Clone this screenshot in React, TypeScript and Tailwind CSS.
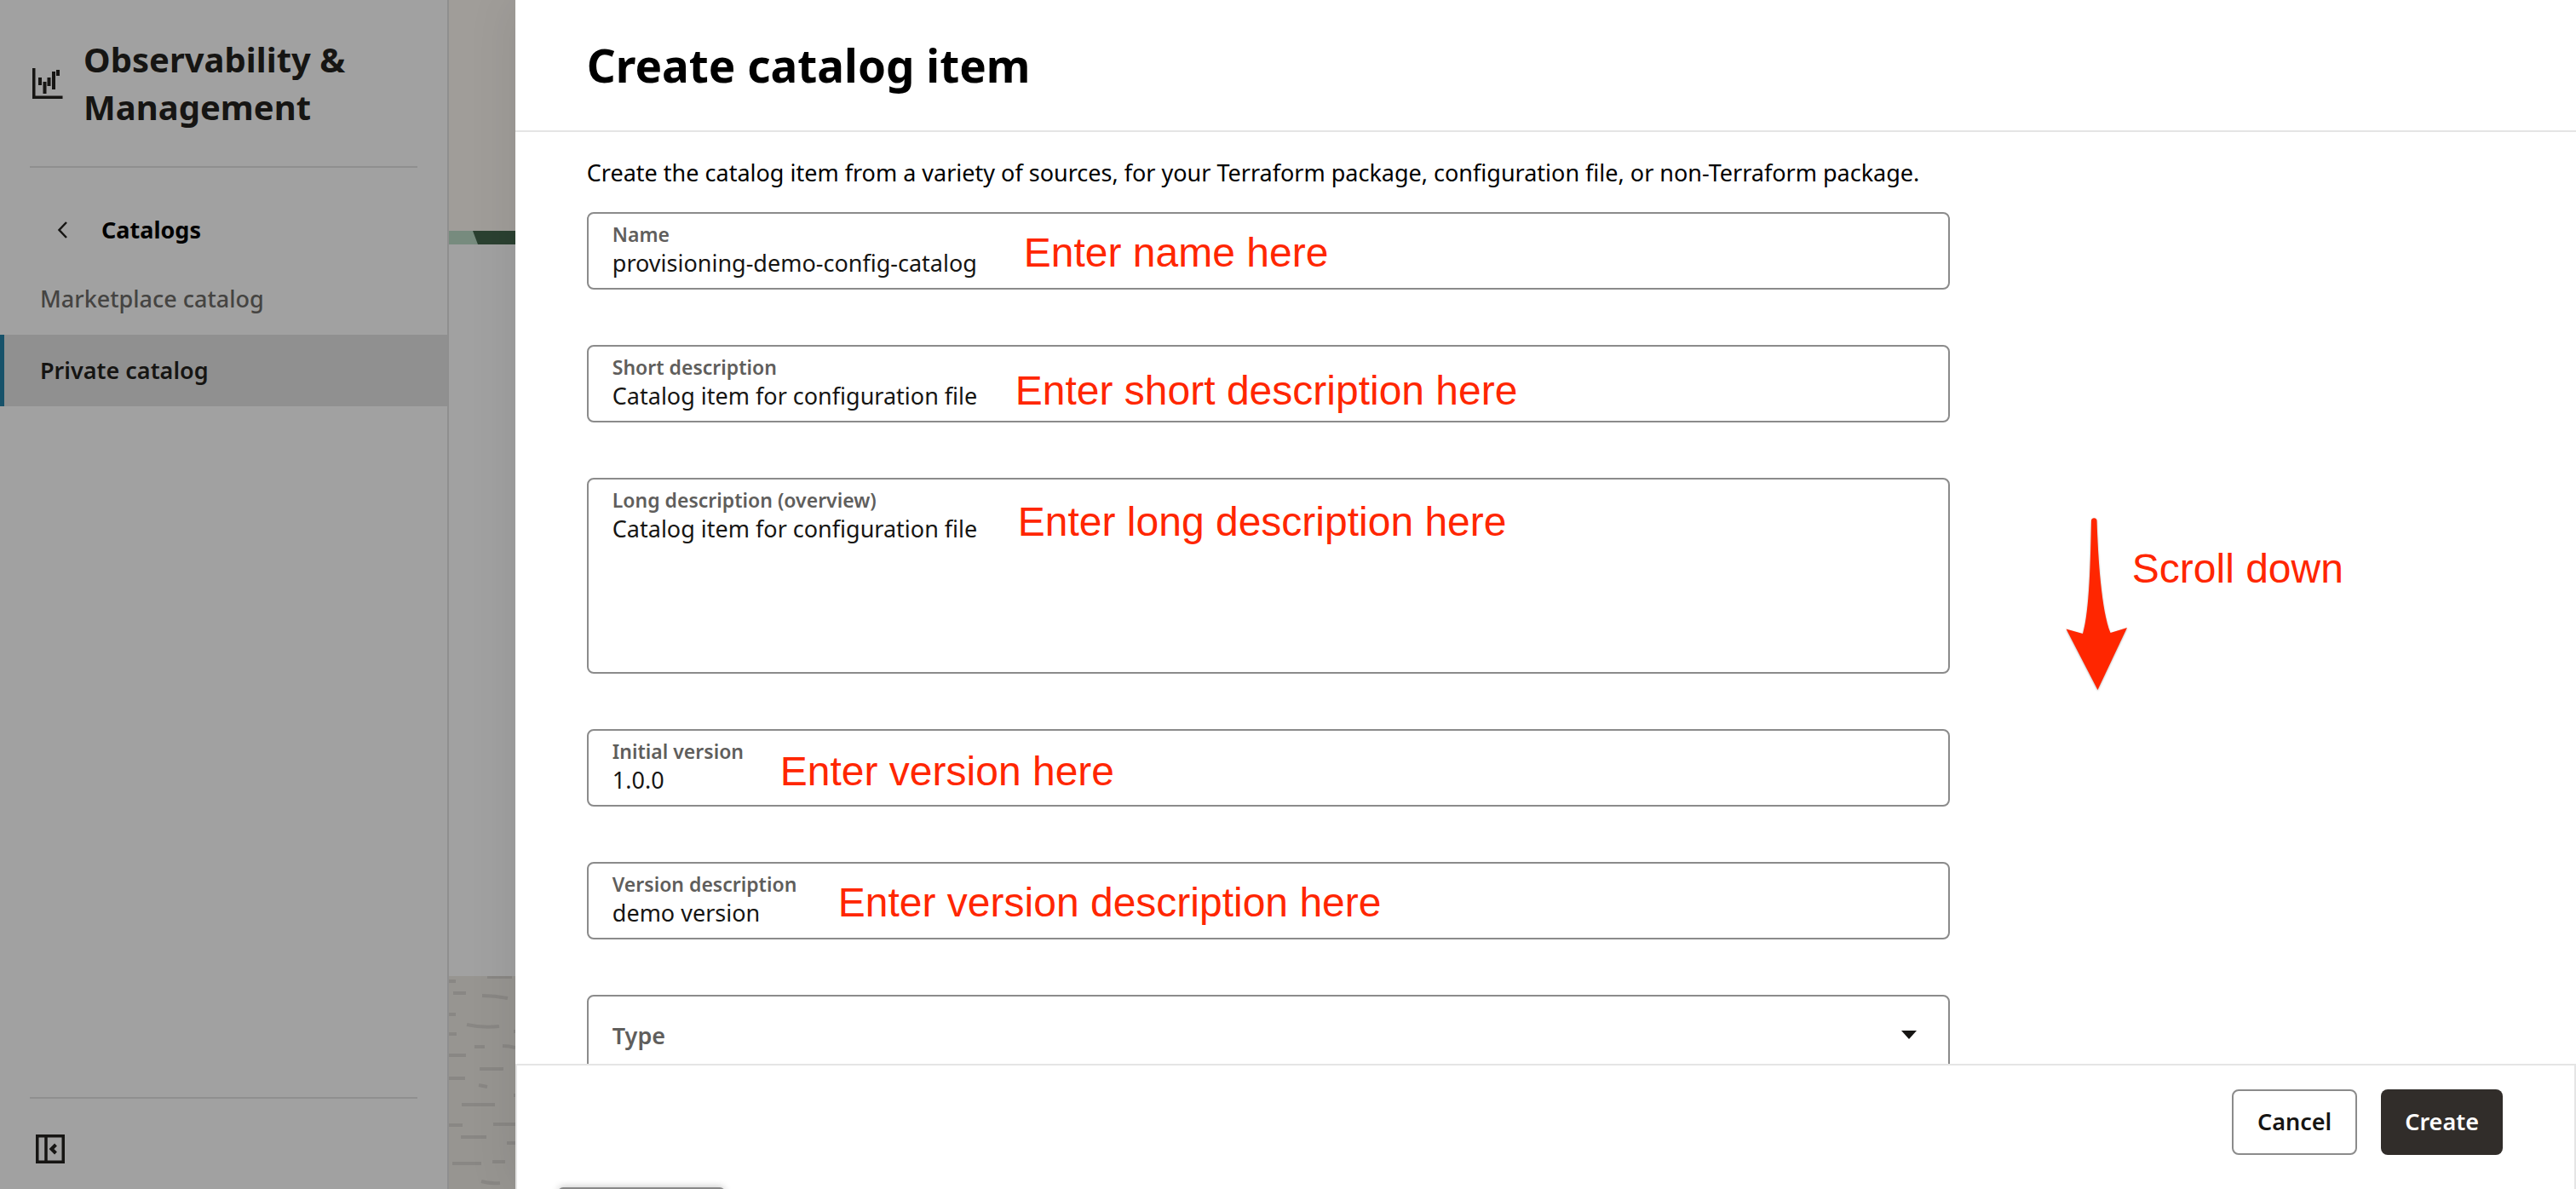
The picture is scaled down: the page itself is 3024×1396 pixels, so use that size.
import type { ReactNode } from "react";

const fieldText = "w-full bg-transparent text-[27px] leading-9 text-[#161513] outline-none";

function Note({ className, children }: { className: string; children: ReactNode }) {
  return (
    <span
      className={`pointer-events-none absolute whitespace-nowrap font-['Liberation_Sans',sans-serif] text-5xl leading-14 text-[#ff2600] ${className}`}
    >
      {children}
    </span>
  );
}

function Field({
  id,
  label,
  value,
  note,
  noteClass,
  multiline = false,
}: {
  id: string;
  label: string;
  value: string;
  note: string;
  noteClass: string;
  multiline?: boolean;
}) {
  return (
    <div className="relative flex flex-col rounded-lg border-2 border-[#8b8b8b] px-7 pt-2 pb-[11px]">
      <label htmlFor={id} className="self-start text-[23px] leading-8 font-semibold text-[#5f5e5c]">
        {label}
      </label>
      {multiline ? (
        <textarea id={id} defaultValue={value} className={`${fieldText} h-[175px] resize-none`} />
      ) : (
        <input id={id} type="text" defaultValue={value} className={`${fieldText} h-9`} />
      )}
      <Note className={noteClass}>{note}</Note>
    </div>
  );
}

function ObservabilityIcon() {
  return (
    <svg viewBox="0 0 36 36" className="size-9 shrink-0" fill="#161513" aria-hidden="true">
      <path d="M0 0h3.500v32.500h32v3.500H0z" />
      <path d="M7 11h4v9H7zM12.500 16h4v14h-4zM17.500 11h4v10h-4zM23 4h4v21h-4zM28 2h4v7h-4z" />
    </svg>
  );
}

function Sidebar() {
  return (
    <nav className="flex w-[527px] shrink-0 flex-col border-r-2 border-[#8f8f8f] bg-[#a1a1a1]">
      <div className="mx-[35px] flex items-center gap-6 border-b-2 border-[#8f8f8f] pt-[42px] pb-[41px] pl-[3px]">
        <ObservabilityIcon />
        <h2 className="text-[40px] leading-14 font-bold text-[#161513]">
          Observability &amp;
          <br />
          Management
        </h2>
      </div>
      <button type="button" className="mt-[34px] flex h-[78px] items-center gap-10 pl-[67px] text-[27px] font-bold text-black">
        <svg viewBox="0 0 12 20" className="h-5 w-3" fill="none" stroke="#161513" strokeWidth="2.500" aria-hidden="true">
          <path d="M11 1 2.500 10 11 19" />
        </svg>
        Catalogs
      </button>
      <a href="#marketplace" className="flex h-[84px] items-center pl-[47px] text-[27px] font-medium text-[#454442]">
        Marketplace catalog
      </a>
      <a
        href="#private"
        aria-current="page"
        className="flex h-[84px] items-center border-l-[5px] border-[#17526a] bg-[#909090] pl-[42px] text-[27px] font-semibold text-[#161513]"
      >
        Private catalog
      </a>
      <div className="mx-[35px] mt-auto border-t-2 border-[#8f8f8f] pt-[42px] pb-[30px] pl-[7px]">
        <button type="button" aria-label="Collapse navigation" className="block">
          <svg viewBox="0 0 34 34" className="size-[34px]" fill="none" stroke="#161513" strokeWidth="3.500" aria-hidden="true">
            <path d="M1.750 1.750h30.500v30.500H1.750zM12 2v30" />
            <path d="M23.500 12 18.500 17l5 5" strokeWidth="4" />
          </svg>
        </button>
      </div>
    </nav>
  );
}

const strokes = [
  "M0 6h8", "M5 20h15", "M45 1h29", "M39 23q15 0 30 3", "M0 45h8", "M21 57q18 4 38 2", "M0 68h9", "M30 83h12",
  "M63 82q8 0 15 2", "M0 93h20", "M36 109h28", "M0 120h19", "M35 128l10 2", "M15 151h39", "M0 175h16", "M52 174h26",
  "M14 189h30", "M68 196h10", "M4 220h34", "M51 218h15", "M38 241q10 3 22 2", "M76 65h2", "M76 140h2",
];

function Backdrop() {
  return (
    <div className="flex flex-1 flex-col bg-[#a1a1a1]" aria-hidden="true">
      <div className="h-[271px] bg-[#a09d99]" />
      <svg viewBox="0 0 78 16" className="h-4 w-[78px]">
        <path fill="#778b7e" d="M0 0h78v16H0z" />
        <path fill="#2b4131" d="M28 0h50v16H34z" />
      </svg>
      <svg viewBox="0 0 78 250" className="mt-auto h-[250px] w-[78px]">
        <path fill="#979591" d="M0 0h78v250H0z" />
        <g fill="none" stroke="#878582" strokeWidth="4" opacity="0.850">
          {strokes.map((d) => (
            <path key={d} d={d} />
          ))}
        </g>
      </svg>
    </div>
  );
}

export default function App() {
  return (
    <div className="relative flex h-screen overflow-hidden bg-white font-['Noto_Sans',sans-serif]">
      <div className="flex w-1/5 shrink-0">
        <Sidebar />
        <Backdrop />
      </div>
      <section
        aria-labelledby="drawer-title"
        className="relative flex w-4/5 flex-col bg-white shadow-[0_0_56px_rgba(0,0,0,0.090)]"
      >
        <header className="border-b-2 border-[#e5e5e5] px-[84px] pt-[41px] pb-10">
          <h1 id="drawer-title" className="text-[53px] leading-[72px] font-bold text-black">
            Create catalog item
          </h1>
        </header>
        <main className="min-h-0 flex-1 overflow-hidden px-[84px] pt-[30px]">
          <p className="mb-7 text-[27px] leading-9 text-black">
            Create the catalog item from a variety of sources, for your Terraform package, configuration file, or
            non-Terraform package.
          </p>
          <form className="relative flex max-w-[1600px] flex-col gap-[65px]">
            <Field id="name" label="Name" value="provisioning-demo-config-catalog" note="Enter name here" noteClass="left-[511px] top-[18px]" />
            <Field id="short" label="Short description" value="Catalog item for configuration file" note="Enter short description here" noteClass="left-[501px] top-6" />
            <Field id="long" label="Long description (overview)" value="Catalog item for configuration file" note="Enter long description here" noteClass="left-[504px] top-[22px]" multiline />
            <Field id="version" label="Initial version" value="1.0.0" note="Enter version here" noteClass="left-[225px] top-5" />
            <Field id="version-description" label="Version description" value="demo version" note="Enter version description here" noteClass="left-[293px] top-[18px]" />
            <div className="relative rounded-lg border-2 border-[#8b8b8b]">
              <label htmlFor="type" className="pointer-events-none absolute top-7 left-7 text-[27px] leading-9 font-semibold text-[#5f5e5c]">
                Type
              </label>
              <select id="type" defaultValue="" className="h-[88px] w-full appearance-none bg-transparent px-7 outline-none">
                <option value="" />
              </select>
              <svg viewBox="0 0 18 10" className="pointer-events-none absolute top-10 right-[37px] h-2.5 w-[18px]" fill="#161513" aria-hidden="true">
                <path d="M0 0h18L9 10z" />
              </svg>
            </div>
            <div className="pointer-events-none absolute top-[358px] left-full ml-[136px] flex">
              <svg viewBox="0 0 74 206" className="h-[206px] w-[74px] drop-shadow-[0_1px_1px_rgba(0,0,0,0.300)]" fill="#ff2600" aria-hidden="true">
                <path d="M30 4a3.300 3.300 0 0 1 6.500 0C38 50 42 110 52.500 136L72 130 37.500 203 .500 131.500 20 137C28 110 29 50 30 4z" />
              </svg>
              <span className="mt-[33px] ml-1 whitespace-nowrap font-['Liberation_Sans',sans-serif] text-5xl leading-14 text-[#ff2600]">
                Scroll down
              </span>
            </div>
          </form>
        </main>
        <footer className="flex justify-end gap-7 border-2 border-b-0 border-[#e5e5e5] bg-white px-[84px] pt-7 pb-10">
          <button type="button" className="h-[77px] rounded-lg border-2 border-[#8b8b8b] bg-white px-7 text-[27px] font-semibold text-[#161513]">
            Cancel
          </button>
          <button type="button" className="h-[77px] rounded-lg bg-[#312d2a] px-7 text-[27px] font-semibold text-white">
            Create
          </button>
        </footer>
        <div className="absolute -bottom-1 left-[50px] h-1.5 w-[196px] rounded-t-md bg-[#888888] shadow-[0_0_8px_rgba(0,0,0,0.300)]" />
      </section>
    </div>
  );
}
